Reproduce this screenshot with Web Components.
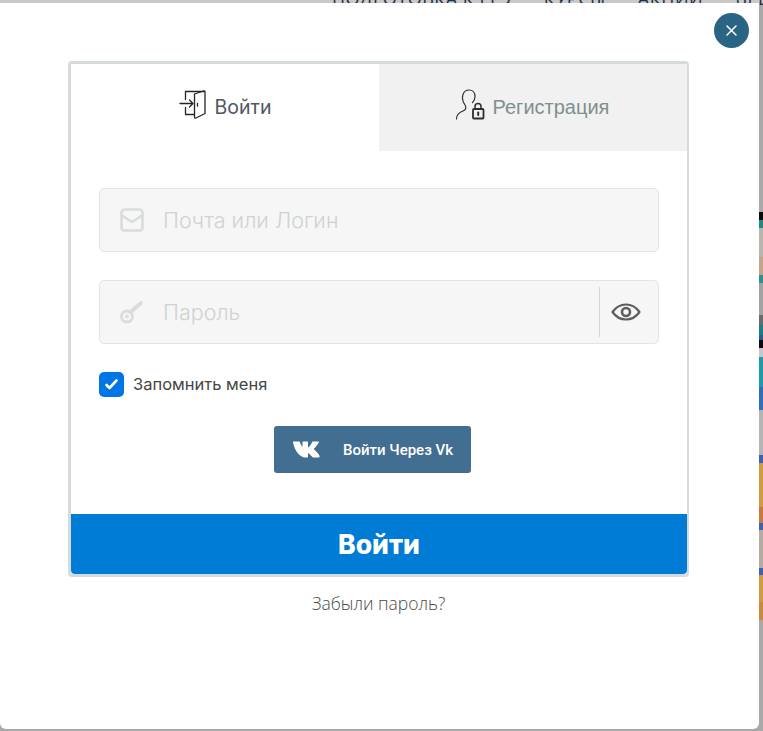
<!DOCTYPE html>
<html lang="ru">
<head>
<meta charset="utf-8">
<title>Войти</title>
<style>
    html, body { margin: 0; height: 100%; overflow: hidden; background: #a9a9a9; }
</style>
</head>
<body>
<site-backdrop></site-backdrop>
<login-modal>
    <div slot="tabs">
        <login-tab icon="door" active>Войти</login-tab>
        <login-tab icon="person">Регистрация</login-tab>
    </div>
    <login-field icon="mail">Почта или Логин</login-field>
    <login-field icon="key" eye>Пароль</login-field>
    <login-check>Запомнить меня</login-check>
    <vk-button>Войти Через Vk</vk-button>
    <span slot="submit">Войти</span>
    <span slot="forgot">Забыли пароль?</span>
</login-modal>

<script>
(function(){
    const icons = {
        door: `<svg width="28" height="30" viewBox="0 0 28 30" fill="none" stroke="#22262b" stroke-width="1.3" stroke-linejoin="round" stroke-linecap="round">
            <path d="M1 14.5H14M10.5 11l3.500 3.500-3.500 3.500"/>
            <path d="M6.500 10.500V2.500H25M6.500 18.500V25.500H15.500"/>
            <path d="M15.500 5L24.500 2Q26 1.700 26 3V24.500L17 29Q15.500 29.500 15.500 28Z"/>
            <path d="M18.500 14.500v2.500"/>
        </svg>`,
        person: `<svg width="30" height="31" viewBox="0 0 30 31" fill="none" stroke="#2b2f33" stroke-width="1.2" stroke-linecap="round" stroke-linejoin="round">
            <path d="M1.500 30C1.500 25.500 4 23.500 8 22C11.500 20.500 11.500 18 9.500 15C7.500 12 7 8.500 8 5.500C9 2.500 11.500 1 14 1C17.500 1 20 3.500 20 7.500C20 10 19 12 17.500 13.500"/>
            <path d="M20 19.500V17.500A3 3 0 0 1 26 17.500V19.500" stroke-width="1.500"/>
            <rect x="18" y="20" width="10.500" height="9.500" rx="1" stroke-width="1.800"/>
            <path d="M23.200 23.500v2.500" stroke-width="2"/>
        </svg>`,
        mail: `<svg width="24" height="24" viewBox="0 0 24 24" fill="none" stroke="#d9dcdc" stroke-width="2.600" stroke-linejoin="round" stroke-linecap="round">
            <rect x="1.500" y="1.500" width="21" height="21" rx="3"/>
            <path d="M2 7.500L12 14L22 7.500"/>
        </svg>`,
        key: `<svg width="24" height="24" viewBox="0 0 24 24" fill="none" stroke="#d9dcdc" stroke-linecap="round" stroke-linejoin="round">
            <circle cx="7" cy="16.500" r="5.500" stroke-width="2.800"/>
            <circle cx="7" cy="16.500" r="1.200" stroke-width="1.500"/>
            <path d="M10.500 12L21 3" stroke-width="3.800"/>
        </svg>`
    };

    const backdropTemplate = document.createElement("template");
    backdropTemplate.innerHTML = `
        <style>
        :host {
            display: block;
            height: 731px;
            overflow: hidden;
            position: relative;
            background: #a9a9a9;
        }
        nav {
            display: flex;
            gap: 32px;
            height: 3px;
            padding-left: 332px;
            background: #c9c9c9;
            font: 18px/1 "Open Sans", sans-serif;
            letter-spacing: .5px;
            color: #1b2f48;
            white-space: nowrap;
        }
        nav span { display: block; margin-top: -11px; }
        .strip {
            position: absolute;
            right: 0;
            top: 212px;
            width: 4px;
            height: 408px;
            background: linear-gradient(to bottom,
                #0a0a0a 0 8px, #1e8a86 8px 16px, #b9b3ad 16px 45px, #c4a58c 45px 63px, #2a8f96 63px 71px,
                #a3a3a3 71px 103px, #6b6b6b 103px 113px, #1b7f88 113px 123px, #2b5a9a 123px 128px,
                #0c0c0c 128px 136px, #c4c8cc 136px 145px, #1f9aa8 145px 175px, #2f6ebd 175px 198px,
                #b4b4b4 198px 243px, #3a62b8 243px 251px, #d09a3e 251px 295px, #c97a3a 295px 311px,
                #3a62b8 311px 318px, #b7aba0 318px 356px, #3a62b8 356px 363px, #d09a3e 363px 390px, #c98a3e 390px 408px);
        }
        </style>
        <nav><span>ПОДГОТОВКА К ЕГЭ</span><span>КУРСЫ</span><span>АКЦИИ</span><span>ВЕБИНАРЫ</span></nav>
        <div class="strip"></div>
    `;

    class SiteBackdrop extends HTMLElement {
        constructor() {
            super();
            this.attachShadow({mode: "open"}).appendChild(backdropTemplate.content.cloneNode(true));
        }
    }
    customElements.define("site-backdrop", SiteBackdrop);

    const modalTemplate = document.createElement("template");
    modalTemplate.innerHTML = `
        <style>
        :host {
            display: block;
            position: absolute;
            left: 0;
            top: 3px;
            width: 759px;
            height: 726px;
            box-sizing: border-box;
            padding: 58px 70px 0 68px;
            background: #fff;
            border-radius: 0 0 6px 6px;
            font-family: Inter, sans-serif;
        }
        .close {
            position: absolute;
            left: 714px;
            top: 10px;
            width: 35px;
            height: 35px;
            border-radius: 50%;
            background: #2a6484;
            display: flex;
            align-items: center;
            justify-content: center;
        }
        .card {
            border: 3px solid #d5dbdb;
            border-right-width: 2px;
            border-radius: 4px;
            background: #fff;
        }
        ::slotted([slot="tabs"]) {
            display: grid;
            grid-template-columns: 308px 308px;
            height: 87px;
        }
        .form {
            display: flex;
            flex-direction: column;
            padding: 37px 28px 41px;
        }
        .submit {
            height: 60px;
            background: #007bd6;
            border-radius: 0 0 4px 4px;
            color: #fff;
            font: 800 26.5px/60px Inter, sans-serif;
            text-align: center;
        }
        .forgot {
            margin-top: 15px;
            text-align: center;
            font: 300 17.5px/22px "Open Sans", sans-serif;
            color: #4a4a4a;
        }
        </style>
        <div class="close">
            <svg width="11" height="11" viewBox="0 0 11 11" stroke="#fff" stroke-width="1.500" stroke-linecap="round"><path d="M1 1l9 9M10 1l-9 9"/></svg>
        </div>
        <div class="card">
            <slot name="tabs"></slot>
            <div class="form"><slot></slot></div>
            <div class="submit"><slot name="submit"></slot></div>
        </div>
        <div class="forgot"><slot name="forgot"></slot></div>
    `;

    class LoginModal extends HTMLElement {
        constructor() {
            super();
            this.attachShadow({mode: "open"}).appendChild(modalTemplate.content.cloneNode(true));
        }
    }
    customElements.define("login-modal", LoginModal);

    class LoginTab extends HTMLElement {
        constructor() {
            super();
            const active = this.hasAttribute("active");
            this.attachShadow({mode: "open"}).innerHTML = `
                <style>
                :host {
                    display: flex;
                    align-items: center;
                    justify-content: center;
                    gap: 8px;
                    padding: 0 ${active ? 0 : 2}px 1px 0;
                    box-sizing: border-box;
                    background: ${active ? "#fff" : "#f1f1f1"};
                    color: ${active ? "#50565f" : "#7f8f8f"};
                    font: ${active ? "19.5px/1 Inter" : '20px/1 "Liberation Sans"'}, sans-serif;
                }
                svg { display: block; margin-top: -6px; }
                span { padding-top: ${active ? 2 : 0}px; }
                </style>
                ${icons[this.getAttribute("icon")]}<span><slot></slot></span>
            `;
        }
    }
    customElements.define("login-tab", LoginTab);

    class LoginField extends HTMLElement {
        constructor() {
            super();
            const eye = this.hasAttribute("eye") ? `
                <div class="eye">
                    <svg width="30" height="18" viewBox="0 0 30 18" fill="none" stroke="#5e5e5e">
                        <path d="M1.500 9C5 4 9.500 1.500 15 1.500S25 4 28.500 9C25 14 20.500 16.500 15 16.500S5 14 1.500 9Z" stroke-width="2.200" stroke-linejoin="round"/>
                        <circle cx="15" cy="9" r="4" stroke-width="2.600"/>
                    </svg>
                </div>` : "";
            this.attachShadow({mode: "open"}).innerHTML = `
                <style>
                :host {
                    display: flex;
                    align-items: center;
                    height: 64px;
                    box-sizing: border-box;
                    margin-bottom: 28px;
                    padding-left: 20px;
                    border: 1px solid #e3e5e5;
                    border-radius: 5px;
                    background: #f6f6f6;
                    color: #cfd2d2;
                    font: 300 21.5px/1 Inter, sans-serif;
                }
                svg { display: block; }
                .text { margin-left: 19px; padding-top: 2px; flex: 1; }
                .eye {
                    width: 59px;
                    height: 50px;
                    box-sizing: border-box;
                    padding-right: 6px;
                    border-left: 1px solid #d4d6d6;
                    display: flex;
                    align-items: center;
                    justify-content: center;
                }
                </style>
                ${icons[this.getAttribute("icon")]}<span class="text"><slot></slot></span>${eye}
            `;
        }
    }
    customElements.define("login-field", LoginField);

    const checkTemplate = document.createElement("template");
    checkTemplate.innerHTML = `
        <style>
        :host {
            display: flex;
            align-items: center;
            gap: 9px;
            height: 26px;
            margin-top: -1px;
            color: #444;
            font: 16.5px/1 Inter, sans-serif;
        }
        .box {
            width: 25px;
            height: 25px;
            border-radius: 5px;
            background: #0075e6;
            display: flex;
            align-items: center;
            justify-content: center;
        }
        </style>
        <div class="box">
            <svg width="15" height="13" viewBox="0 0 15 13" fill="none" stroke="#fff" stroke-width="2.600" stroke-linecap="round" stroke-linejoin="round"><path d="M2.500 7l3 3L12.500 2.500"/></svg>
        </div>
        <span><slot></slot></span>
    `;

    class LoginCheck extends HTMLElement {
        constructor() {
            super();
            this.attachShadow({mode: "open"}).appendChild(checkTemplate.content.cloneNode(true));
        }
    }
    customElements.define("login-check", LoginCheck);

    const vkTemplate = document.createElement("template");
    vkTemplate.innerHTML = `
        <style>
        :host {
            display: flex;
            align-items: center;
            align-self: center;
            box-sizing: border-box;
            width: 197px;
            height: 47px;
            margin: 29px 13px 0 0;
            padding-left: 18px;
            border-radius: 3px;
            background: #426e91;
            color: #fff;
            font: 500 15px/1 Roboto, sans-serif;
        }
        svg { display: block; }
        span { margin-left: 23px; padding-top: 2px; }
        </style>
        <svg width="28" height="19" viewBox="0 0 28 19" fill="#fff">
            <path d="M1.300 1.500H7C7.500 1.500 7.800 1.800 8 2.300C8.800 4.600 9.800 6.500 10.500 7V2.300C10.500 1.900 10.800 1.500 11.200 1.500H15.500C15.900 1.500 16 1.800 16 2.200V7.800C17.500 6.800 19 4.500 20.200 2C20.400 1.600 20.700 1.500 21 1.500H26.300C26.900 1.500 27 1.900 26.800 2.400C26 4.300 23 7.500 21.700 9C23.500 10.600 26.500 13.500 27.500 15.800C27.800 16.600 27.500 17.500 26.700 17.500H21.500C21 17.500 20.700 17.300 20.400 17C19.300 15.700 17.500 14 16 13V16.800C16 17.200 15.800 17.500 15.400 17.500H13.500C8 17.500 2.700 11.500 1 2.300C.9 1.800 1 1.500 1.300 1.500Z"/>
        </svg>
        <span><slot></slot></span>
    `;

    class VkButton extends HTMLElement {
        constructor() {
            super();
            this.attachShadow({mode: "open"}).appendChild(vkTemplate.content.cloneNode(true));
        }
    }
    customElements.define("vk-button", VkButton);
})();
</script>
</body>
</html>
